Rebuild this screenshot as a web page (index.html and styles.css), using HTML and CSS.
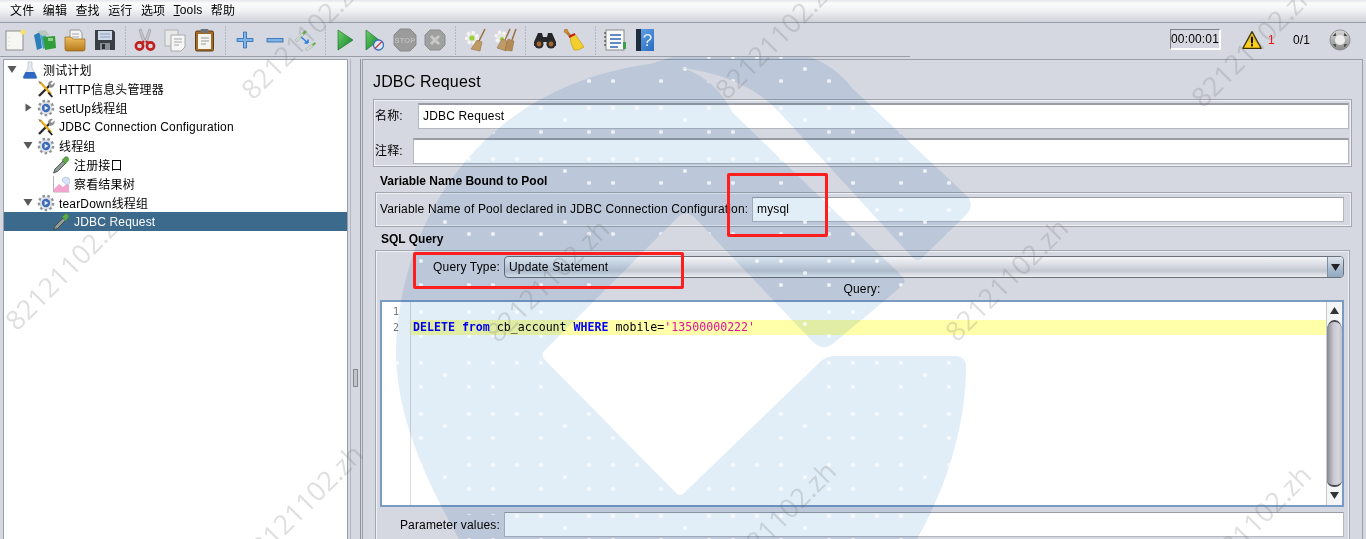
FILE: index.html
```html
<!DOCTYPE html>
<html lang="zh-CN">
<head>
    <meta charset="UTF-8">
    <title>Apache JMeter</title>
    <link rel="stylesheet" href="styles.css">
</head>
<body>
    <svg class="defs" width="0" height="0">
        <defs>
            <linearGradient id="g-green" x1="0" y1="0" x2="1" y2="1"><stop offset="0" stop-color="#6fd06a"/><stop offset="1" stop-color="#0d7f28"/></linearGradient>
            <linearGradient id="g-folder" x1="0" y1="0" x2="0" y2="1"><stop offset="0" stop-color="#f0c060"/><stop offset="1" stop-color="#b57a1c"/></linearGradient>
            <linearGradient id="g-gray" x1="0" y1="0" x2="0" y2="1"><stop offset="0" stop-color="#d8d8d8"/><stop offset="1" stop-color="#8a8a8a"/></linearGradient>
            <linearGradient id="g-help" x1="0" y1="0" x2="1" y2="1"><stop offset="0" stop-color="#6aa6e8"/><stop offset="1" stop-color="#2a6cc0"/></linearGradient>

            <symbol id="i-new" viewBox="0 0 24 24"><rect x="3" y="3" width="17" height="19" fill="#f6f6f2" stroke="#8d8d8d"/><path d="M6 9v.5M6 13v.5M6 17v.5" stroke="#aaa"/><circle cx="20" cy="4" r="2.6" fill="#f4e36a"/></symbol>
            <symbol id="i-templates" viewBox="0 0 24 24"><path d="M1 7l6-3 2 16-5 2z" fill="#2a7fb8"/><path d="M7 5l5-2 3 15-5 3z" fill="#4aa0c8"/><path d="M10 9l12-1 1 12-11 2z" fill="#2f9e3a"/><path d="M4 3l8-1 5 5-8 1z" fill="#b9c9c0"/><path d="M15 10h5v3h-5z" fill="#8fd08a"/></symbol>
            <symbol id="i-open" viewBox="0 0 24 24"><path d="M7 2h10l2 3v8H7z" fill="#f4f4f4" stroke="#999"/><path d="M9 6h7M9 9h7" stroke="#aaa"/><path d="M2 9h6l2 2h12v10q0 2-2 2H4q-2 0-2-2z" fill="url(#g-folder)" stroke="#94661a" stroke-width=".7"/></symbol>
            <symbol id="i-save" viewBox="0 0 24 24"><path d="M2 2h18l2 2v18H2z" fill="#3a3f46"/><rect x="5" y="3" width="14" height="9" fill="#cfd8e6"/><path d="M7 6h10M7 9h10" stroke="#8fa2bd"/><rect x="7" y="15" width="10" height="7" fill="#8a8f96"/><rect x="9" y="16" width="3" height="5" fill="#2c3036"/></symbol>
            <symbol id="i-cut" viewBox="0 0 24 24"><path d="M8 1l4 11 4-11 2 1-4 13h-4L6 2z" fill="#c4c6ca" stroke="#8b8d92" stroke-width=".5"/><circle cx="6.5" cy="18" r="3.6" fill="none" stroke="#c41f1f" stroke-width="2.6"/><circle cx="17.5" cy="18" r="3.6" fill="none" stroke="#c41f1f" stroke-width="2.6"/><path d="M9 15l2-2M15 15l-2-2" stroke="#c41f1f" stroke-width="2"/></symbol>
            <symbol id="i-copy" viewBox="0 0 24 24"><rect x="2" y="2" width="13" height="16" fill="#e8e8e8" stroke="#b2b2b2"/><path d="M8 7h14v12l-4 4H8z" fill="#f6f6f6" stroke="#a8a8a8"/><path d="M11 11h8M11 14h8M11 17h5" stroke="#a5a5a5"/></symbol>
            <symbol id="i-paste" viewBox="0 0 24 24"><rect x="2.5" y="3" width="18" height="20" rx="1.5" fill="#a66a24" stroke="#5c3c14"/><path d="M5 6h13v15H5z" fill="#f4f4f0"/><rect x="7.5" y="1" width="8" height="4" rx="1" fill="#6f7076"/><path d="M8 10h8M8 13h8M8 16h5" stroke="#9a9a9a"/></symbol>
            <symbol id="i-plus" viewBox="0 0 24 24"><path d="M10.5 4h3v6.5H20v3h-6.5V20h-3v-6.5H4v-3h6.5z" fill="#7fb2e6" stroke="#2a6ab0" stroke-width=".8"/></symbol>
            <symbol id="i-minus" viewBox="0 0 24 24"><rect x="4" y="10.5" width="16" height="3.5" fill="#7fb2e6" stroke="#2a6ab0" stroke-width=".8"/></symbol>
            <symbol id="i-toggle" viewBox="0 0 24 24"><path d="M2 12l7-7 2 2-7 7z" fill="#cfd9c8" stroke="#9aa" stroke-width=".5"/><path d="M9 5l3-3 2 2-3 3z" fill="#6fae55"/><path d="M12 21l7-5 2 2-7 5z" fill="#cfd9c8" stroke="#9aa" stroke-width=".5"/><path d="M19 16l3-2 1 2-3 2z" fill="#6fae55"/><path d="M8 9l7 6m0 0v-3.5m0 3.5h-3.5" stroke="#2f7ee0" stroke-width="1.6" fill="none"/></symbol>
            <symbol id="i-play" viewBox="0 0 24 24"><path d="M5 2l15 10L5 22z" fill="url(#g-green)" stroke="#0f6a24" stroke-width=".6"/></symbol>
            <symbol id="i-playno" viewBox="0 0 24 24"><path d="M3 2l13 10L3 22z" fill="url(#g-green)" stroke="#0f6a24" stroke-width=".6"/><circle cx="15.5" cy="17" r="5" fill="#dfe8f5" stroke="#3a72c4" stroke-width="1.3"/><path d="M12 20.5l7-7" stroke="#d03a3a" stroke-width="1.3"/></symbol>
            <symbol id="i-stop" viewBox="0 0 24 24"><path d="M7 1h10l6 6v10l-6 6H7l-6-6V7z" fill="#9b9b9b" stroke="#8a8a8a"/><text x="12" y="15" class="stop-label">STOP</text></symbol>
            <symbol id="i-shut" viewBox="0 0 24 24"><path d="M7 2h10l5 5v10l-5 5H7l-5-5V7z" fill="#a0a0a0" stroke="#8c8c8c"/><path d="M8 8l8 8M16 8l-8 8" stroke="#c8c8c8" stroke-width="3"/></symbol>
            <symbol id="i-clear" viewBox="0 0 24 24"><circle cx="9" cy="10" r="5.5" fill="#e6e6e6" stroke="#f6f6f6" stroke-width="3" stroke-dasharray="3 2"/><circle cx="9" cy="10" r="2.6" fill="#9bcf3a"/><path d="M22 1l-6 12" stroke="#9a7040" stroke-width="1.6"/><path d="M14 12l5 2-2 9-9-2z" fill="#c09a66" stroke="#8e6a3a" stroke-width=".5"/></symbol>
            <symbol id="i-clearall" viewBox="0 0 24 24"><circle cx="8" cy="9" r="5" fill="#e6e6e6" stroke="#f6f6f6" stroke-width="3" stroke-dasharray="3 2"/><circle cx="9" cy="11" r="2" fill="#9bcf3a"/><path d="M17 1l-5 11M23 1l-4 11" stroke="#9a7040" stroke-width="1.5"/><path d="M9 11l5 2-1 10-9-3z" fill="#c09a66" stroke="#8e6a3a" stroke-width=".5"/><path d="M15 11l6 2-2 10-7-1z" fill="#b48a56" stroke="#8e6a3a" stroke-width=".5"/></symbol>
            <symbol id="i-search" viewBox="0 0 24 24"><path d="M5 5h4l1 4h4l1-4h4l4 9v4H14v-4h-4v4H1v-4z" fill="#26262a"/><circle cx="6" cy="16" r="4.6" fill="#2b2b2e"/><circle cx="18" cy="16" r="4.6" fill="#2b2b2e"/><circle cx="6" cy="16" r="2.4" fill="#a5662c"/><circle cx="18" cy="16" r="2.4" fill="#a5662c"/></symbol>
            <symbol id="i-broom" viewBox="0 0 24 24"><path d="M2 2l7 8" stroke="#b57e34" stroke-width="3"/><circle cx="3" cy="3" r="2.3" fill="#c18b40"/><path d="M7 8l5-2 9 13q-6 4-10 3Q7 15 7 8z" fill="#f2cf2c" stroke="#b89410" stroke-width=".6"/><path d="M6 9l6-3" stroke="#c42020" stroke-width="2"/></symbol>
            <symbol id="i-func" viewBox="0 0 24 24"><rect x="3" y="2" width="18" height="20" fill="#f8f8f8" stroke="#8a8a8a"/><path d="M7 7h11M7 11h11M7 15h11M7 19h8" stroke="#2f66b4" stroke-width="1.6"/><path d="M3 5H1M3 9H1M3 13H1M3 17H1" stroke="#333"/><rect x="20" y="14" width="3" height="7" fill="#3aa04a"/></symbol>
            <symbol id="i-help" viewBox="0 0 24 24"><path d="M3 1h18v22H3z" fill="url(#g-help)"/><rect x="3" y="1" width="5" height="22" fill="#1f2d3d"/><text x="14.5" y="18" class="help-label">?</text></symbol>
            <symbol id="i-warn" viewBox="0 0 24 24"><path d="M12 2L23 22H1z" fill="#ffcf1a" stroke="#3c3200" stroke-width="1.5" stroke-linejoin="round"/><rect x="10.8" y="8" width="2.4" height="8" fill="#111"/><rect x="10.8" y="17" width="2.4" height="2.6" fill="#111"/></symbol>
            <symbol id="i-expand" viewBox="0 0 24 24"><circle cx="12" cy="12" r="11" fill="url(#g-gray)" stroke="#7d7d7d" stroke-width=".8"/><circle cx="12" cy="12" r="5.5" fill="#ececec"/><path d="M4 7.5L7.5 4v3.5zM20 7.5L16.5 4v3.5zM4 16.5L7.5 20v-3.5zM20 16.5L16.5 20v-3.5z" fill="#3f3f3f"/></symbol>

            <symbol id="t-flask" viewBox="0 0 18 18"><path d="M7 1h4v6l5 9q.5 1.5-1 1.5H3q-1.5 0-1-1.5l5-9z" fill="#e6ebf2" stroke="#aab2c0" stroke-width=".6"/><path d="M4.5 11h9l2.3 5q.2 1.4-1 1.4H3.2q-1.2 0-1-1.4z" fill="#2f68c4"/></symbol>
            <symbol id="t-tools" viewBox="0 0 18 18"><path d="M2 16L13 5" stroke="#2c2c2c" stroke-width="2.4"/><path d="M11 3.5a4 4 0 0 1 5-2.5l-2.5 2.5 1.5 1.5 2.5-2.5a4 4 0 0 1-5 5z" fill="#8d8d8d"/><path d="M3 2l11 12" stroke="#e9a81e" stroke-width="2.4"/><path d="M1 1l3 1-1 2z" fill="#777"/><path d="M12 12l4 4.5-1.5 1-4-4.5z" fill="#222"/></symbol>
            <symbol id="t-gear" viewBox="0 0 18 18"><circle cx="9" cy="9" r="6.6" fill="#d4d6da" stroke="#8f939a" stroke-width="3.4" stroke-dasharray="2.4 2.2"/><circle cx="9" cy="9" r="6" fill="#e2e4e8"/><circle cx="9" cy="9" r="4.2" fill="#3d6cb8"/><path d="M7.6 6.8L11.4 9l-3.8 2.2z" fill="#e8f0fa"/></symbol>
            <symbol id="t-dropper" viewBox="0 0 18 18"><path d="M1.5 17L3 13l8-8 2.5 2.5-8 8z" fill="#8e9a94" stroke="#3a3f3c" stroke-width=".8"/><path d="M10 4l3-3q1.5-1 3 .5t.5 3L13.5 8z" fill="#5fa84a" stroke="#3e7c2e" stroke-width=".5"/></symbol>
            <symbol id="t-chart" viewBox="0 0 18 18"><path d="M1.5 1v16h16" fill="none" stroke="#b5b5b5"/><path d="M2 17v-3l5-5 4 3 6-5v10z" fill="#f2a6cf"/><path d="M10 6a4 4 0 1 1 5 4z" fill="#d6e4f6" stroke="#9fb8dc" stroke-width=".6"/></symbol>
        </defs>
    </svg>

    <div class="app">
        <div class="menubar">
            <span>文件</span><span>编辑</span><span>查找</span><span>运行</span><span>选项</span><span><u>T</u>ools</span><span>帮助</span>
        </div>

        <div class="toolbar">
            <div class="tool"><svg class="ti"><use href="#i-new"/></svg></div>
            <div class="tool"><svg class="ti"><use href="#i-templates"/></svg></div>
            <div class="tool"><svg class="ti"><use href="#i-open"/></svg></div>
            <div class="tool"><svg class="ti"><use href="#i-save"/></svg></div>
            <div class="sep"></div>
            <div class="tool"><svg class="ti"><use href="#i-cut"/></svg></div>
            <div class="tool"><svg class="ti"><use href="#i-copy"/></svg></div>
            <div class="tool"><svg class="ti"><use href="#i-paste"/></svg></div>
            <div class="sep"></div>
            <div class="tool"><svg class="ti"><use href="#i-plus"/></svg></div>
            <div class="tool"><svg class="ti"><use href="#i-minus"/></svg></div>
            <div class="tool"><svg class="ti"><use href="#i-toggle"/></svg></div>
            <div class="sep"></div>
            <div class="tool"><svg class="ti"><use href="#i-play"/></svg></div>
            <div class="tool"><svg class="ti"><use href="#i-playno"/></svg></div>
            <div class="tool"><svg class="ti"><use href="#i-stop"/></svg></div>
            <div class="tool"><svg class="ti"><use href="#i-shut"/></svg></div>
            <div class="sep"></div>
            <div class="tool"><svg class="ti"><use href="#i-clear"/></svg></div>
            <div class="tool"><svg class="ti"><use href="#i-clearall"/></svg></div>
            <div class="sep"></div>
            <div class="tool"><svg class="ti"><use href="#i-search"/></svg></div>
            <div class="tool"><svg class="ti"><use href="#i-broom"/></svg></div>
            <div class="sep"></div>
            <div class="tool"><svg class="ti"><use href="#i-func"/></svg></div>
            <div class="tool"><svg class="ti"><use href="#i-help"/></svg></div>

            <div class="status">
                <div class="timer">00:00:01</div>
                <svg class="warn"><use href="#i-warn"/></svg>
                <span class="warn-count">1</span>
                <span class="threads">0/1</span>
                <svg class="expand"><use href="#i-expand"/></svg>
            </div>
        </div>

        <div class="main">
            <div class="tree">
                <div class="row lvl0"><span class="arrow down"></span><svg class="node"><use href="#t-flask"/></svg><span>测试计划</span></div>
                <div class="row lvl1"><span class="arrow"></span><svg class="node"><use href="#t-tools"/></svg><span>HTTP信息头管理器</span></div>
                <div class="row lvl1"><span class="arrow right"></span><svg class="node"><use href="#t-gear"/></svg><span>setUp线程组</span></div>
                <div class="row lvl1"><span class="arrow"></span><svg class="node"><use href="#t-tools"/></svg><span>JDBC Connection Configuration</span></div>
                <div class="row lvl1"><span class="arrow down"></span><svg class="node"><use href="#t-gear"/></svg><span>线程组</span></div>
                <div class="row lvl2"><svg class="node"><use href="#t-dropper"/></svg><span>注册接口</span></div>
                <div class="row lvl2"><svg class="node"><use href="#t-chart"/></svg><span>察看结果树</span></div>
                <div class="row lvl1"><span class="arrow down"></span><svg class="node"><use href="#t-gear"/></svg><span>tearDown线程组</span></div>
                <div class="row lvl2 selected"><svg class="node"><use href="#t-dropper"/></svg><span>JDBC Request</span></div>
            </div>

            <div class="splitter"><div class="grip"></div></div>

            <div class="panel">
                <div class="title">JDBC Request</div>

                <div class="etched name-box">
                    <div class="name-row">
                        <label class="name-label">名称:</label>
                        <div class="field">JDBC Request</div>
                    </div>
                    <div class="name-row">
                        <label class="comment-label">注释:</label>
                        <div class="field"></div>
                    </div>
                </div>

                <div class="section-title">Variable Name Bound to Pool</div>
                <div class="etched pool-box">
                    <label class="pool-label">Variable Name of Pool declared in JDBC Connection Configuration:</label>
                    <div class="field pool-field">mysql</div>
                </div>

                <div class="section-title sql-title">SQL Query</div>
                <div class="etched sql-box">
                    <div class="form-row">
                        <label class="form-label">Query Type:</label>
                        <div class="combo">
                            <span class="combo-text">Update Statement</span>
                            <span class="combo-btn"></span>
                        </div>
                    </div>
                    <div class="query-label">Query:</div>
                    <div class="editor">
                        <div class="gutter">
                            <div>1</div>
                            <div>2</div>
                        </div>
                        <div class="code">
                            <div class="line"></div>
                            <div class="line current"><b>DELETE</b> <b>from</b> cb_account <b>WHERE</b> mobile=<em>'13500000222'</em></div>
                        </div>
                        <div class="scrollbar">
                            <span class="sb-up"></span>
                            <span class="sb-thumb"></span>
                            <span class="sb-down"></span>
                        </div>
                    </div>
                    <div class="form-row param-row">
                        <label class="form-label">Parameter values:</label>
                        <div class="field param-field"></div>
                    </div>
                </div>
            </div>
        </div>
    </div>

    <!-- pasted-on logo -->
    <svg class="logo" viewBox="0 0 1366 539">
        <defs>
            <pattern id="dots" width="120" height="51" patternUnits="userSpaceOnUse" x="7" y="0">
                <circle cx="6" cy="6" r="2.1"/><circle cx="30" cy="6" r="2.1"/><circle cx="54" cy="6" r="2.1"/><circle cx="102" cy="6" r="2.1"/>
                <circle cx="78" cy="18" r="2.1"/><circle cx="6" cy="30" r="2.1"/><circle cx="54" cy="30" r="2.1"/><circle cx="102" cy="30" r="2.1"/>
            </pattern>
            <path id="logo-a" d="M459 539C420 470 396 410 396 350C400 210 490 85 650 64Q687 62 713 86Q725 97 733 113L902 276Q907 281 902 286L835 342Q824 352 813 342L695 218Q686 209 677 218L545 350Q540 355 545 360L676 493Q680 497 684 493L820 362Q826 356 835 356L955 356Q967 356 966 370C965 430 945 490 917 539Z"/>
            <path id="logo-b" d="M650 64L672 57L810 57Q835 66 853 89L967 196Q975 205 966 215L922 258Q917 263 912 257L780 113Q760 90 720 76Q685 66 650 64Z"/>
            <!-- no dots where the form text sits -->
            <clipPath id="no-text">
                <path clip-rule="evenodd" d="M0 0H1366V539H0Z M370 70H490V96H370Z M410 104H520V128H410Z M375 174H570V189H375Z M375 202H800V218H375Z M375 232H450V247H375Z M430 258H620V276H430Z M840 281H885V298H840Z M410 320H765V335H410Z M395 515H502V532H395Z"/>
            </clipPath>
        </defs>
        <g class="logo-shape">
            <use href="#logo-a"/>
            <use href="#logo-b"/>
        </g>
        <g class="logo-dots" clip-path="url(#no-text)">
            <use href="#logo-a"/>
            <use href="#logo-b"/>
        </g>
    </svg>

    <span class="wm wm-a">82121102.zh</span>
    <span class="wm wm-b">82121102.zh</span>
    <span class="wm wm-c">82121102.zh</span>
    <span class="wm wm-d">82121102.zh</span>
    <span class="wm wm-e">82121102.zh</span>
    <span class="wm wm-f">82121102.zh</span>
    <span class="wm wm-g">82121102.zh</span>
    <span class="wm wm-h">82121102.zh</span>
    <span class="wm wm-i">82121102.zh</span>

    <div class="mark mark-pool"></div>
    <div class="mark mark-type"></div>
</body>
</html>
```

FILE: styles.css
```css
html, body {
    margin: 0;
    height: 539px;
    overflow: hidden;
    background: #d5d8e0;
    font-family: "Liberation Sans", "Noto Sans CJK SC", sans-serif;
    font-size: 12px;
    letter-spacing: 0.16px;
    color: #000;
}

.defs {
    position: absolute;
}

.stop-label {
    font-family: "Liberation Sans", sans-serif;
    font-size: 7.5px;
    font-weight: bold;
    fill: #bdbdbd;
    text-anchor: middle;
}

.help-label {
    font-family: "Liberation Sans", sans-serif;
    font-size: 17px;
    fill: #e8f2ff;
    text-anchor: middle;
}

.app {
    display: flex;
    flex-direction: column;
    height: 539px;
}

/* menu */
.menubar {
    box-sizing: border-box;
    height: 23px;
    flex: none;
    display: flex;
    align-items: center;
    gap: 8.4px;
    padding: 0 0 3px 10px;
    background: linear-gradient(#e6e7eb, #fbfbfc 15%, #f2f3f5 45%, #cfd2da);
    border-bottom: 1px solid #9a9ea8;
}

/* toolbar */
.toolbar {
    position: relative;
    height: 33px;
    flex: none;
    display: flex;
    align-items: center;
}

.toolbar::after {
    content: "";
    position: absolute;
    left: 0;
    top: 33px;
    width: 910px;
    height: 1px;
    background: #9a9ea8;
}

.tool {
    width: 30px;
    display: flex;
    justify-content: center;
}

.ti {
    width: 24px;
    height: 24px;
}

.sep {
    width: 10px;
    height: 30px;
    background: linear-gradient(#8f939c 50%, transparent 50%) center / 1px 3px repeat-y;
}

.status {
    margin-left: auto;
    display: flex;
    align-items: center;
    padding-right: 15px;
}

.timer {
    width: 48px;
    height: 18px;
    line-height: 18px;
    text-align: center;
    border: 2px solid;
    border-color: #7f828a #fff #fff #7f828a;
    border-width: 1px 2px 2px 1px;
}

.warn {
    width: 22px;
    height: 20px;
    margin-left: 20px;
}

.warn-count {
    position: relative;
    z-index: 1;
    width: 7px;
    margin-left: 5px;
    color: #f0101a;
}

.threads {
    width: 18px;
    margin-left: 18px;
}

.expand {
    width: 22px;
    height: 22px;
    margin-left: 18px;
}

/* main area */
.main {
    flex: 1;
    min-height: 0;
    display: flex;
    margin-top: 3px;
}

.tree {
    width: 343px;
    margin-left: 3px;
    flex: none;
    background: #fff;
    border: 1px solid #9a9ea8;
    border-bottom: none;
}

.row {
    height: 19px;
    display: flex;
    align-items: center;
    white-space: nowrap;
}

.lvl0 {
    padding-left: 3px;
}

.lvl1 {
    padding-left: 19px;
}

.lvl2 {
    padding-left: 48px;
}

.lvl0 .node {
    margin-left: 4px;
    margin-right: 4px;
}

.lvl1 .node {
    margin-left: 4px;
    margin-right: 4px;
}

.lvl2 .node {
    margin-right: 4px;
}

.selected {
    background: #3b6a8c;
    color: #fff;
}

.arrow {
    width: 10px;
    height: 10px;
    flex: none;
}

.arrow.down {
    background: #5a5a5a;
    clip-path: polygon(5% 15%, 95% 15%, 50% 85%);
}

.arrow.right {
    background: #5a5a5a;
    clip-path: polygon(25% 10%, 85% 50%, 25% 90%);
}

.node {
    width: 18px;
    height: 18px;
    flex: none;
}

.splitter {
    width: 11px;
    flex: none;
    box-sizing: border-box;
    border-left: 1px solid #b4b7bf;
    border-right: 1px solid #8f939c;
    margin-left: 2px;
    padding-top: 310px;
    display: flex;
    justify-content: center;
}

.grip {
    width: 3px;
    height: 16px;
    border: 1px solid #85888f;
    background: #c2c5cc;
}

.panel {
    flex: 1;
    min-width: 0;
    margin-left: 1px;
    margin-right: 3px;
    border: 1px solid #9a9ea8;
    border-bottom: none;
    overflow: hidden;
}

.title {
    height: 39px;
    line-height: 44px;
    padding-left: 10px;
    font-size: 16px;
}

.etched {
    box-sizing: border-box;
    border: 1px solid #a3a6ae;
    box-shadow: inset 0 0 0 1px #eff0f3;
}

.name-box {
    height: 68px;
    margin: 0 10px 0 10px;
    padding: 3px 2px 0 1px;
    display: flex;
    flex-direction: column;
    gap: 9px;
}

.name-row {
    display: flex;
    align-items: center;
    height: 26px;
}

.name-label {
    width: 43px;
    flex: none;
    margin-top: -3px;
}

.comment-label {
    width: 38px;
    flex: none;
    margin-top: -3px;
}

.field {
    flex: 1;
    box-sizing: border-box;
    height: 26px;
    line-height: 22px;
    padding-left: 4px;
    background: #fff;
    border: 1px solid #b4b7be;
    border-top: 2px solid #9a9da5;
}

.section-title {
    height: 25px;
    line-height: 28px;
    padding-left: 17px;
    font-weight: bold;
    letter-spacing: 0;
}

.sql-title {
    height: 23px;
    padding-left: 18px;
    line-height: 24px;
}

.pool-box {
    height: 35px;
    margin: 0 10px 0 12px;
    padding: 4px 7px 0 4px;
    display: flex;
}

.pool-label {
    width: 372px;
    flex: none;
    line-height: 25px;
    white-space: nowrap;
}

.pool-field {
    height: 25px;
    line-height: 23px;
    border-top-width: 1px;
}

.sql-box {
    margin: 0 12px 0 12px;
    height: 295px;
    padding: 5px 5px 0 4px;
}

.form-row {
    display: flex;
    align-items: center;
}

.form-label {
    width: 120px;
    flex: none;
    padding-right: 4px;
    text-align: right;
    white-space: nowrap;
}

.combo {
    flex: 1;
    box-sizing: border-box;
    height: 22px;
    padding-left: 4px;
    display: flex;
    justify-content: space-between;
    align-items: center;
    border: 1px solid #6c7078;
    border-radius: 4px;
    background: linear-gradient(#f4f5f7, #d9dce3 40%, #c4c8d1 70%, #eceef2);
}

.combo-btn {
    position: relative;
    width: 15px;
    height: 20px;
    background: linear-gradient(#dfe5ec, #a9bccf 60%, #8fa8c2);
    border-left: 1px solid #7d8fa3;
    border-radius: 0 3px 3px 0;
}

.combo-btn::after {
    content: "";
    position: absolute;
    left: 3px;
    top: 7px;
    width: 9px;
    height: 7px;
    background: #222;
    clip-path: polygon(0 0, 100% 0, 50% 100%);
}

.query-label {
    height: 22px;
    line-height: 22px;
    text-align: center;
}

.editor {
    box-sizing: border-box;
    height: 207px;
    display: flex;
    background: #fff;
    border: 2px solid #7a9cc4;
}

.gutter {
    width: 29px;
    flex: none;
    box-sizing: border-box;
    padding: 2px 11px 0 0;
    border-right: 1px solid #dcdcdc;
    text-align: right;
    color: #777;
    font-family: "DejaVu Sans Mono", monospace;
    font-size: 10px;
    line-height: 16px;
    letter-spacing: 0;
}

.code {
    flex: 1;
    min-width: 0;
    padding-top: 3px;
    font-family: "DejaVu Sans Mono", monospace;
    font-size: 11.6px;
    line-height: 15px;
    letter-spacing: 0;
}

.line {
    height: 15px;
    padding-left: 2px;
    white-space: pre;
}

.current {
    background: #ffffaa;
}

.code b {
    color: #0000ff;
}

.code em {
    font-style: normal;
    color: #e0139c;
}

.scrollbar {
    width: 15px;
    flex: none;
    display: flex;
    flex-direction: column;
    background: #f4f5f7;
    border-left: 1px solid #c8cad0;
}

.sb-up, .sb-down {
    position: relative;
    height: 18px;
    flex: none;
}

.sb-up::after, .sb-down::after {
    content: "";
    position: absolute;
    left: 3px;
    top: 5px;
    width: 9px;
    height: 7px;
    background: #333;
}

.sb-up::after {
    clip-path: polygon(50% 0, 100% 100%, 0 100%);
}

.sb-down::after {
    clip-path: polygon(0 0, 100% 0, 50% 100%);
}

.sb-thumb {
    flex: 1;
    border-radius: 7px 7px 7px 7px / 10px 10px 6px 6px;
    background: linear-gradient(90deg, #85888f, #c9cbd2 45%, #d6d8de 75%, #bfc1c8);
    border-top: 2px solid #4a4c52;
    border-bottom: 2px solid #4a4c52;
}

.param-row {
    margin-top: 5px;
}

.param-field {
    height: 25px;
    border-top-width: 1px;
}

/* big logo stuck on top of the window */
.logo {
    position: absolute;
    left: 0;
    top: 0;
    width: 1366px;
    height: 539px;
    pointer-events: none;
}

.logo-shape {
    fill: #e1edf7;
    mix-blend-mode: multiply;
}

.logo-dots {
    fill: url(#dots);
}

#dots circle {
    fill: #fff;
    fill-opacity: 0.75;
}

/* id watermark */
.wm {
    position: absolute;
    height: 34px;
    line-height: 34px;
    font-family: "Open Sans", sans-serif;
    font-size: 27px;
    letter-spacing: 0;
    color: rgba(110, 110, 110, 0.22);
    white-space: nowrap;
    transform: rotate(-45deg);
    transform-origin: 0 100%;
    pointer-events: none;
}

.wm-a { left: 22px; top: 303px; }
.wm-b { left: 258px; top: 72px; }
.wm-c { left: 503px; top: 315px; }
.wm-d { left: 732px; top: 72px; }
.wm-e { left: 962px; top: 314px; }
.wm-f { left: 1208px; top: 80px; }
.wm-g { left: 257px; top: 540px; }
.wm-h { left: 730px; top: 557px; }
.wm-i { left: 1205px; top: 561px; }

/* red marks drawn over the screenshot */
.mark {
    position: absolute;
    box-sizing: border-box;
    border: 3px solid #ff1e1e;
    border-radius: 2px;
}

.mark-pool {
    left: 727px;
    top: 173px;
    width: 101px;
    height: 64px;
}

.mark-type {
    left: 413px;
    top: 252px;
    width: 271px;
    height: 37px;
}
```
